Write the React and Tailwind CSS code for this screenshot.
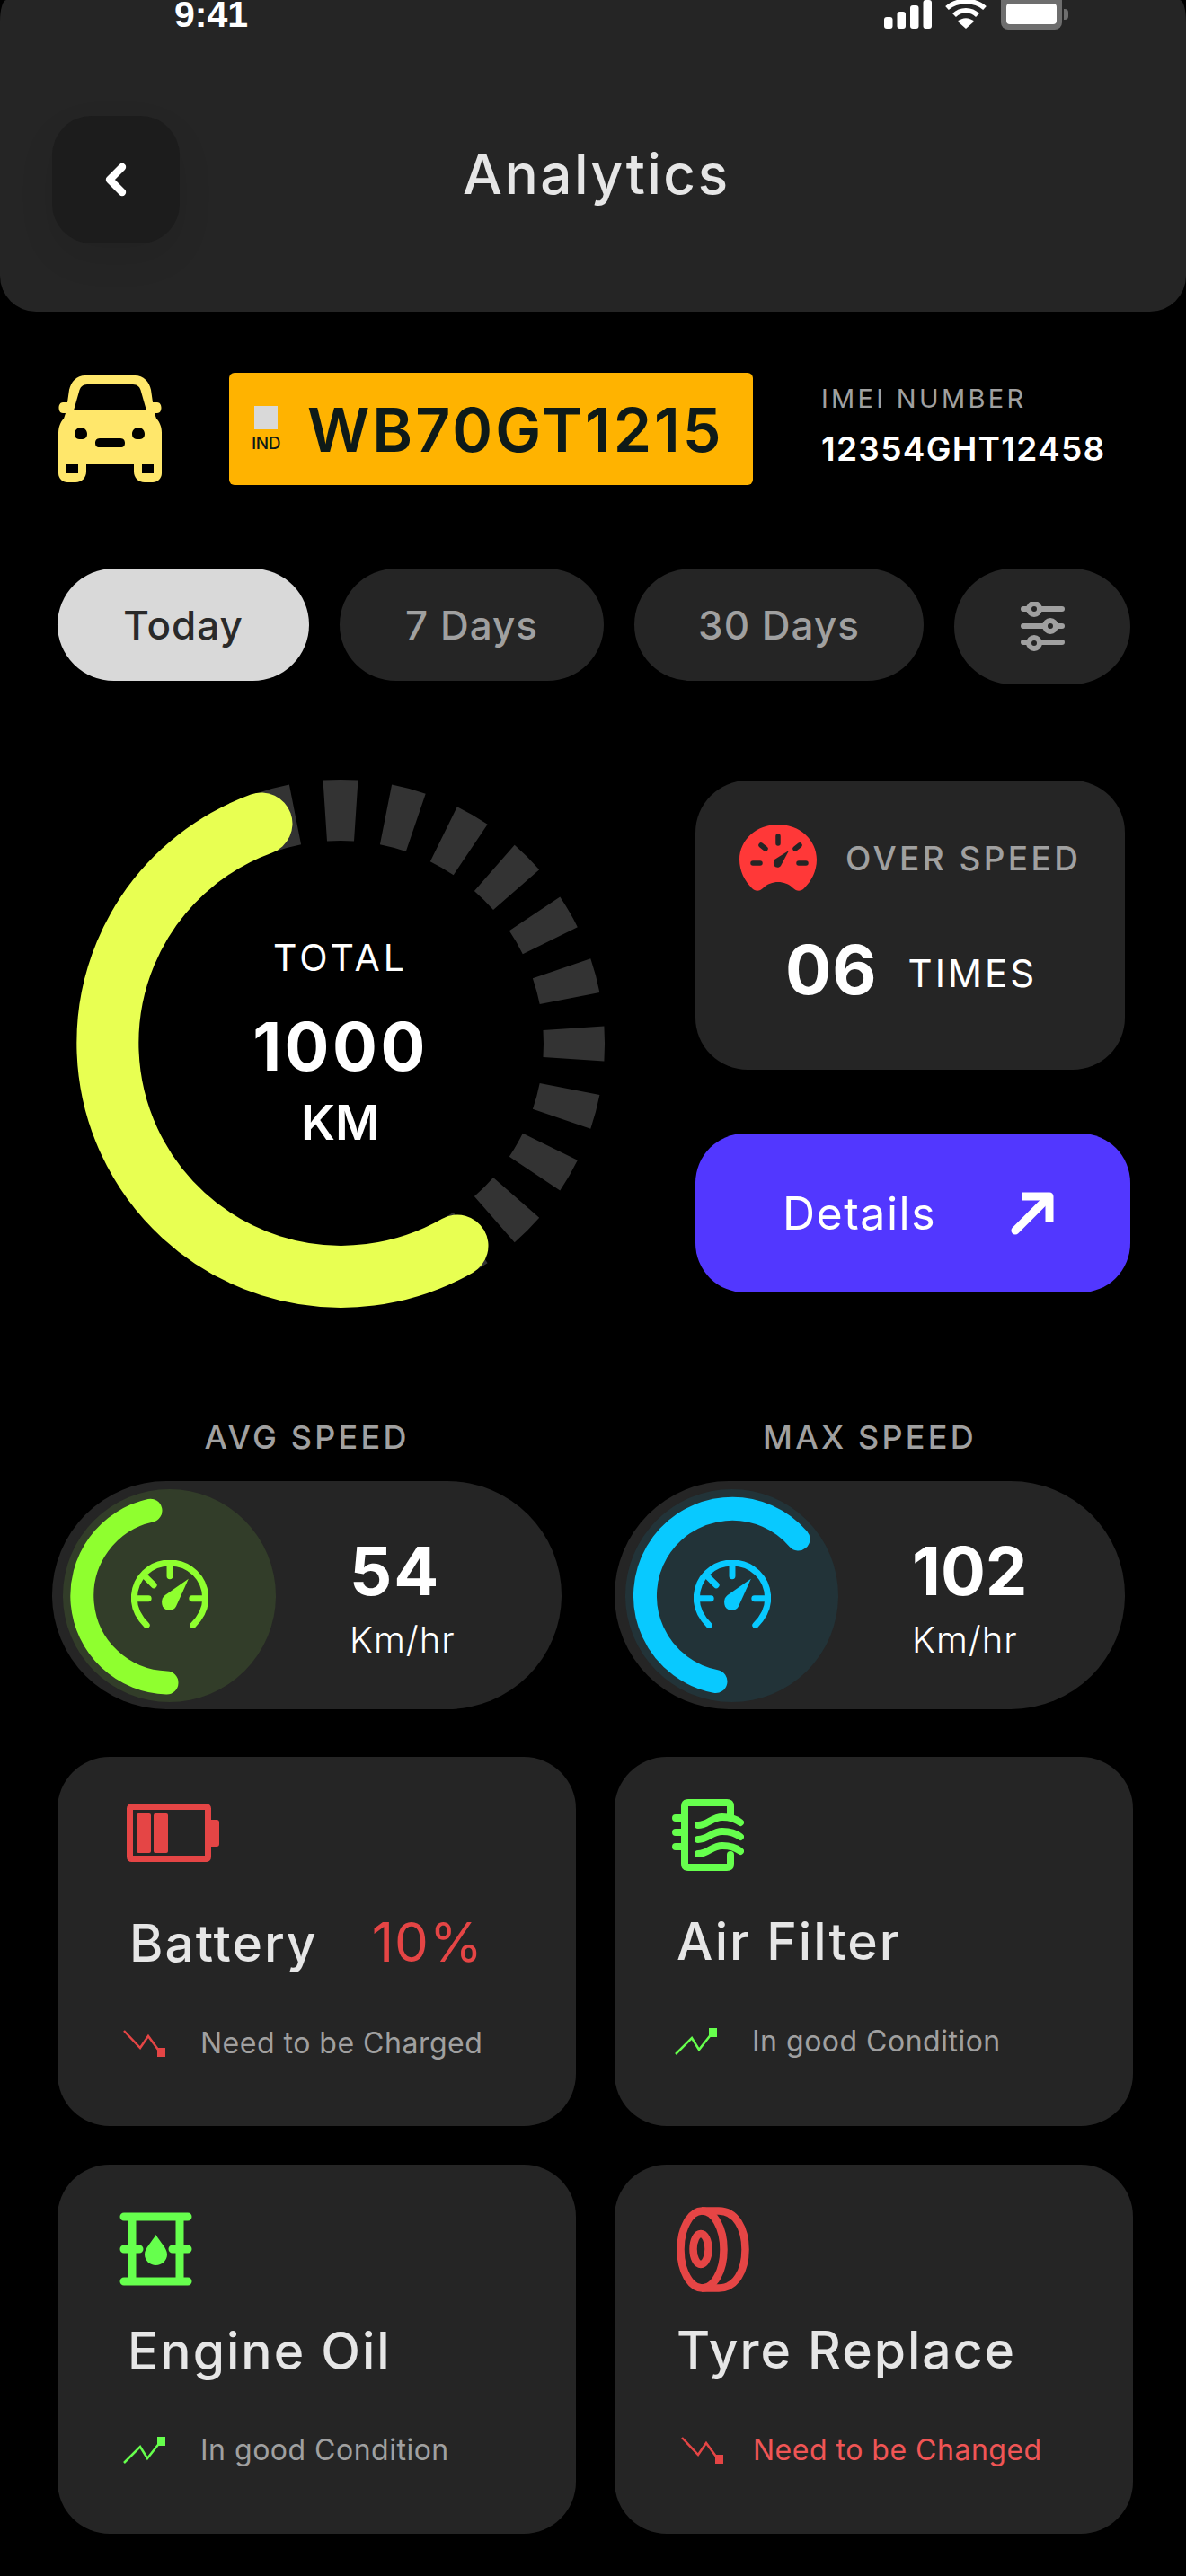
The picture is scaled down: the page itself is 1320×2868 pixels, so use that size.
import { ChevronLeft } from 'lucide-react';

const FONT = 'font-["Inter",sans-serif]';

// wedge for the grey ticks round the gauge, angle in degrees clockwise from top
function wedge(cx, cy, angle, half, r1, r2) {
  const pt = (a, r) => {
    const t = ((a - 90) * Math.PI) / 180;
    return `${(cx + r * Math.cos(t)).toFixed(1)} ${(cy + r * Math.sin(t)).toFixed(1)}`;
  };
  return `M${pt(angle - half, r2)} A${r2} ${r2} 0 0 1 ${pt(angle + half, r2)} L${pt(angle + half, r1)} A${r1} ${r1} 0 0 0 ${pt(angle - half, r1)} Z`;
}

const tickAngles = [-15, 0, 15, 30, 45, 60, 75, 90, 105, 120, 135, 150];

function TotalGauge() {
  return (
    <div className="relative h-[590px] w-[590px] shrink-0">
      <svg width="590" height="590" viewBox="0 0 590 590" className="block">
        {tickAngles.map((a) => (
          <path key={a} d={wedge(295, 295, a, 3.8, 226, 294)} fill="#333333" />
        ))}
        <path
          d="M207 50 A260 260 0 1 0 425 520"
          fill="none"
          stroke="#E8FF52"
          strokeWidth="69"
          strokeLinecap="round"
        />
      </svg>
      <div className="absolute inset-0 flex flex-col items-center text-white">
        <span className="mt-[174px] text-[41px] leading-[50px] tracking-[4px]">TOTAL</span>
        <span className="mt-[32px] text-[74px] font-bold leading-[84px] tracking-[3.5px]">1000</span>
        <span className="mt-[12px] text-[54px] font-semibold leading-[62px]">KM</span>
      </div>
    </div>
  );
}

function SpeedIcon({ color, size = 86 }) {
  return (
    <svg width={size} height={size * 0.9} viewBox="0 0 86 78" fill="none" stroke={color} strokeLinecap="round">
      <path d="M17 73 C8 64 3 54 3 43 C3 20 21 3 43 3 C65 3 83 20 83 43 C83 54 78 64 69 73" strokeWidth="7" />
      <path d="M43 4 V18 M16 19 L25 28 M4 43 H19 M68 43 H82" strokeWidth="7" />
      <path d="M38 39 L64 21 L50 52 C47 58 38 58 35 52 C33 47 34 42 38 39 Z" fill={color} stroke="none" />
    </svg>
  );
}

function SpeedPill({ label, value, arc, color, disc, className, valueClass }) {
  return (
    <div className={`flex flex-col ${className}`}>
      <div className="text-center text-[36px] font-medium leading-[44px] tracking-[3.2px] text-[#a0a0a0]">{label}</div>
      <div className="mt-[27px] flex h-[254px] items-center rounded-full bg-[#252525] pl-[12px]">
        <div className={`relative flex h-[237px] w-[237px] shrink-0 items-center justify-center rounded-full ${disc}`}>
          <svg width="237" height="237" viewBox="0 0 237 237" className="absolute inset-0">
            <path d={arc} fill="none" stroke={color} strokeWidth="26" strokeLinecap="round" />
          </svg>
          <SpeedIcon color={color} />
        </div>
        <div className="ml-[82px] flex flex-col items-start pt-[3px] text-white">
          <span className={`text-[74px] font-bold leading-[84px] ${valueClass}`}>{value}</span>
          <span className="mt-[12px] text-[40px] font-light leading-[46px] tracking-[1px]">Km/hr</span>
        </div>
      </div>
    </div>
  );
}

function TrendDown() {
  return (
    <svg width="48" height="30" viewBox="0 0 48 30" fill="none" className="shrink-0">
      <path d="M1 1 L19 20 L28 7 L42 26" stroke="#E54545" strokeWidth="2.5" />
      <rect x="38" y="20" width="9" height="10" fill="#E54545" />
    </svg>
  );
}

function TrendUp() {
  return (
    <svg width="48" height="30" viewBox="0 0 48 30" fill="none" className="shrink-0">
      <path d="M1 29 L19 11 L27 24 L42 5" stroke="#66FF4D" strokeWidth="2.5" />
      <rect x="38" y="0" width="9" height="10" fill="#66FF4D" />
    </svg>
  );
}

function BatteryIcon() {
  return (
    <svg width="103" height="66" viewBox="0 0 103 66" fill="#E54545">
      <rect x="3.5" y="3.5" width="87" height="58" rx="2" fill="none" stroke="#E54545" strokeWidth="7" />
      <rect x="11" y="11" width="16" height="44" rx="2" />
      <rect x="30" y="11" width="16" height="44" rx="2" />
      <path d="M93 18 H100 Q103 18 103 21 V45 Q103 48 100 48 H93 Z" />
    </svg>
  );
}

function FilterIcon() {
  return (
    <svg width="80" height="80" viewBox="0 0 80 80" fill="none" stroke="#66FF4D" strokeWidth="8" strokeLinecap="round">
      <path d="M65 19 V8 Q65 4 61 4 H18 Q14 4 14 8 V72 Q14 76 18 76 H61 Q65 76 65 72 V62" />
      <path d="M4 21 H14 M4 37 H14 M4 53 H14" />
      <path d="M29 29 C40 29 44 20 56 20 C64 20 71 22 76 26" />
      <path d="M29 45 C40 45 44 36 56 36 C64 36 71 38 76 42" />
      <path d="M29 61 C40 61 44 52 56 52 C64 52 71 54 76 58" />
    </svg>
  );
}

function OilIcon() {
  return (
    <svg width="81" height="82" viewBox="0 0 81 82" fill="none">
      <path d="M5 5 H76 M5 41 H22 M59 41 H76 M5 77 H76" stroke="#66FF4D" strokeWidth="9" strokeLinecap="round" />
      <path d="M14 5 V77 M67 5 V77" stroke="#66FF4D" strokeWidth="9" />
      <path d="M40.5 25 C45 33 53 40 53 47 C53 54 47 59 40.5 59 C34 59 28 54 28 47 C28 40 36 33 40.5 25 Z" fill="#66FF4D" />
    </svg>
  );
}

function TyreIcon() {
  return (
    <svg width="81" height="95" viewBox="0 0 81 95" fill="none" stroke="#E54545" strokeWidth="8.5">
      <ellipse cx="28.5" cy="47.5" rx="24" ry="43" />
      <path d="M28 4.5 H47 C66 4.5 76.5 24 76.5 47.5 C76.5 71 66 90.5 47 90.5 H28" />
      <ellipse cx="27" cy="47" rx="8.5" ry="17" />
    </svg>
  );
}

function StatusCard({ icon, iconBox, title, extra, trend, note, noteColor, titleLeft, trendLeft, noteLeft }) {
  return (
    <div className="h-[411px] w-[577px] rounded-[58px] bg-[#252525]">
      <div className={`flex items-start ${iconBox}`}>{icon}</div>
      <div className={`flex items-baseline text-[57px] font-medium leading-[66px] tracking-[2px] text-[#e6e6e6] ${titleLeft}`}>
        <span>{title}</span>
        {extra && <span className="ml-[60px] text-[60px] font-normal tracking-[1px] text-[#E54545]">{extra}</span>}
      </div>
      <div className={`flex items-center ${trendLeft}`}>
        {trend}
        <span className={`text-[32px] leading-[40px] tracking-[0.5px] ${noteLeft} ${noteColor}`}>{note}</span>
      </div>
    </div>
  );
}

export default function App() {
  return (
    <div className={`h-[2868px] w-[1320px] overflow-hidden bg-black text-white ${FONT}`}>
      {/* header */}
      <header className="h-[347px] rounded-b-[40px] rounded-tl-[7px_24px] rounded-tr-[7px_24px] bg-[#252525] pl-[58px]">
        <div className="flex h-[33px] items-start justify-between pl-[136px] pr-[138px]">
          <span className='mt-[1px] font-["Liberation_Sans",sans-serif] text-[41px] font-semibold leading-[31px]'>9:41</span>
          <div className="flex items-start">
            <svg width="53" height="32" viewBox="0 0 53 32" fill="#fff">
              <rect x="0" y="19" width="9.5" height="13" rx="3" />
              <rect x="14.5" y="13" width="9.5" height="19" rx="3" />
              <rect x="29" y="6" width="9.5" height="26" rx="3" />
              <rect x="43.5" y="0" width="9.5" height="32" rx="3" />
            </svg>
            <svg width="46" height="32" viewBox="0 0 46 32" fill="none" stroke="#fff" strokeWidth="5.5" className="ml-[15px]">
              <path d="M2 9 C13 -1 33 -1 44 9" />
              <path d="M10 17 C17 10 29 10 36 17" />
              <path d="M23 32 L14 24 C19 19 27 19 32 24 Z" fill="#fff" stroke="none" />
            </svg>
            <div className="relative ml-[16px] h-[33px] w-[68px] rounded-b-[8px] bg-[#6e6e6e] px-[6px] pt-[4px]">
              <div className="h-[23px] w-full rounded-[4px] bg-white" />
              <div className="absolute -right-[7px] top-[10px] h-[12px] w-[5px] rounded-r-[4px] bg-[#6e6e6e]" />
            </div>
          </div>
        </div>
        <div className="mt-[96px] flex">
          <div className="flex h-[142px] w-[142px] items-center justify-center rounded-[44px] bg-[#1c1c1c] shadow-[0_16px_40px_rgba(0,0,0,0.08)]">
            <ChevronLeft size={56} strokeWidth={3.6} color="#fff" />
          </div>
          <h1 className="ml-[315px] mt-[30px] text-[62px] font-medium leading-[70px] tracking-[2.5px] text-[#e6e6e6]">Analytics</h1>
        </div>
      </header>

      {/* vehicle row */}
      <section className="mt-[68px] flex items-center pl-[65px]">
        <svg width="115" height="119" viewBox="0 0 115 119" fill="#FFE76B" className="shrink-0">
          <path fillRule="evenodd" d="M30 0 H85 C95 0 101 7 103 16 L105 30 H110 C116 30 116 42 110 42 H107 L109 48 C113 52 115 58 115 64 V109 C115 115 110 119 105 119 H96 C89 119 84 114 84 107 V99 H31 V107 C31 114 26 119 19 119 H10 C5 119 0 115 0 109 V64 C0 58 2 52 6 48 L8 42 H5 C-1 42 -1 30 5 30 H10 L12 16 C14 7 20 0 30 0 Z M32 10 C27 10 24 13 23 18 L17 39 H98 L92 18 C91 13 88 10 83 10 Z M25 58 C20 58 18 62 18 65 C18 69 20 71 25 71 C30 71 32 69 32 65 C32 62 30 58 25 58 Z M89 58 C84 58 82 62 82 65 C82 69 84 71 89 71 C94 71 96 69 96 65 C96 62 94 58 89 58 Z M46 70 C42 70 41 73 41 75 C41 78 42 80 46 80 H69 C73 80 74 78 74 75 C74 73 73 70 69 70 Z M9 99 V109 H22 V99 Z M93 99 V109 H106 V99 Z" />
        </svg>
        <div className="ml-[75px] flex h-[125px] w-[583px] items-center rounded-[6px] bg-[#FFB300] pl-[22px] text-[#0e1a18]">
          <div className="flex w-[38px] flex-col items-center">
            <div className="h-[26px] w-[26px] bg-[#d9d9d9]" />
            <span className="mt-[6px] text-[19px] font-medium leading-[20px] tracking-[-0.5px]">IND</span>
          </div>
          <span className="ml-[27px] text-[68px] font-semibold leading-[80px] tracking-[3px]">WB70GT1215</span>
        </div>
        <div className="ml-[76px] flex flex-col pb-[8px]">
          <span className="text-[29px] leading-[36px] tracking-[3.3px] text-[#a0a0a0]">IMEI NUMBER</span>
          <span className="mt-[16px] text-[37px] font-semibold leading-[44px] tracking-[1.3px] text-white">12354GHT12458</span>
        </div>
      </section>

      {/* range tabs */}
      <nav className="mt-[93px] flex h-[129px] items-start pl-[64px] text-[44px] font-medium tracking-[1px]">
        <div className="flex h-[125px] w-[280px] items-center justify-center rounded-full bg-[#d9d9d9] text-[#2a2a2a]">Today</div>
        <div className="ml-[34px] flex h-[125px] w-[294px] items-center justify-center rounded-full bg-[#252525] text-[#a0a0a0]">7 Days</div>
        <div className="ml-[34px] flex h-[125px] w-[322px] items-center justify-center rounded-full bg-[#252525] text-[#a0a0a0]">30 Days</div>
        <div className="ml-[34px] flex h-[129px] w-[196px] items-center justify-center rounded-full bg-[#252525]">
          <svg width="49" height="55" viewBox="0 0 49 55" fill="none" stroke="#a0a0a0" strokeWidth="6" strokeLinecap="round">
            <path d="M3 8 H46 M3 27 H46 M3 45 H46" />
            <circle cx="15" cy="8" r="6" fill="#252525" />
            <circle cx="33" cy="27" r="6" fill="#252525" />
            <circle cx="15" cy="46" r="6" fill="#252525" />
          </svg>
        </div>
      </nav>

      {/* gauge + over speed */}
      <section className="mt-[105px] flex pl-[84px]">
        <TotalGauge />
        <div className="ml-[100px] flex w-[484px] flex-col pt-[2px]">
          <div className="h-[322px] w-[478px] rounded-[58px] bg-[#252525] pt-[49px]">
            <div className="flex items-center pl-[49px]">
              <svg width="86" height="75" viewBox="0 0 86 75" className="shrink-0">
                <path d="M43 0 C67 0 86 17 86 39 C86 52 80 63 72 71 C68 75 63 74 60 71 C55 66 49 64 43 64 C37 64 31 66 26 71 C23 74 18 75 14 71 C6 63 0 52 0 39 C0 17 19 0 43 0 Z" fill="#FF3838" />
                <g stroke="#252525" strokeWidth="5.5" strokeLinecap="round">
                  <path d="M43 13 V21 M24 23 L29 27 M62 27 L67 23 M15 43 H23 M66 43 H74" />
                </g>
                <path d="M39 39 L55 29 L46 46 C43 50 35 47 39 39 Z" fill="#252525" />
              </svg>
              <span className="ml-[32px] text-[37px] font-medium leading-[46px] tracking-[3.4px] text-[#a0a0a0]">OVER SPEED</span>
            </div>
            <div className="mt-[41px] flex items-end pl-[100px]">
              <span className="text-[76px] font-bold leading-[90px] tracking-[1px]">06</span>
              <span className="mb-[15px] ml-[34px] text-[42px] leading-[50px] tracking-[3px]">TIMES</span>
            </div>
          </div>
          <div className="mt-[71px] flex h-[177px] items-center rounded-[55px] bg-[#5237FF] pl-[97px]">
            <span className="text-[50px] leading-[60px] tracking-[1.5px]">Details</span>
            <svg width="48" height="48" viewBox="0 0 48 48" fill="none" stroke="#fff" strokeWidth="9" strokeLinecap="round" className="ml-[83px]">
              <path d="M5 43 L40 8" />
              <path d="M12 5 H43 V34" strokeLinecap="butt" strokeLinejoin="round" />
            </svg>
          </div>
        </div>
      </section>

      {/* speeds */}
      <section className="mt-[121px] flex pl-[58px]">
        <SpeedPill
          label="AVG SPEED"
          value="54"
          arc="M97.5 23.8 A97 97 0 0 0 115.5 215.5"
          color="#8FFF2F"
          disc="bg-[#323D29]"
          className="w-[567px]"
          valueClass="tracking-[2px]"
        />
        <SpeedPill
          label="MAX SPEED"
          value="102"
          arc="M192.5 55.5 A97 97 0 1 0 100.5 214"
          color="#08C9FF"
          disc="bg-[#223338]"
          className="ml-[59px] w-[568px]"
        />
      </section>

      {/* condition cards */}
      <section className="mt-[53px] box-content grid w-[1197px] grid-cols-[577px_577px] gap-x-[43px] gap-y-[43px] pl-[64px]">
        <StatusCard
          icon={<BatteryIcon />}
          iconBox="pl-[77px] pt-[52px]"
          title="Battery"
          extra="10%"
          titleLeft="pl-[80px] mt-[55px]"
          trend={<TrendDown />}
          trendLeft="pl-[73px] mt-[58px]"
          note="Need to be Charged"
          noteLeft="ml-[38px]"
          noteColor="text-[#a0a0a0]"
        />
        <StatusCard
          icon={<FilterIcon />}
          iconBox="pl-[64px] pt-[47px]"
          title="Air Filter"
          titleLeft="pl-[69px] mt-[46px]"
          trend={<TrendUp />}
          trendLeft="pl-[67px] mt-[58px]"
          note="In good Condition"
          noteLeft="ml-[38px]"
          noteColor="text-[#a0a0a0]"
        />
        <StatusCard
          icon={<OilIcon />}
          iconBox="pl-[69px] pt-[53px]"
          title="Engine Oil"
          titleLeft="pl-[78px] mt-[40px]"
          trend={<TrendUp />}
          trendLeft="pl-[73px] mt-[57px]"
          note="In good Condition"
          noteLeft="ml-[38px]"
          noteColor="text-[#a0a0a0]"
        />
        <StatusCard
          icon={<TyreIcon />}
          iconBox="pl-[69px] pt-[47px]"
          title="Tyre Replace"
          titleLeft="pl-[69px] mt-[32px]"
          trend={<TrendDown />}
          trendLeft="pl-[74px] mt-[58px]"
          note="Need to be Changed"
          noteLeft="ml-[32px]"
          noteColor="text-[#F05555]"
        />
      </section>
    </div>
  );
}
